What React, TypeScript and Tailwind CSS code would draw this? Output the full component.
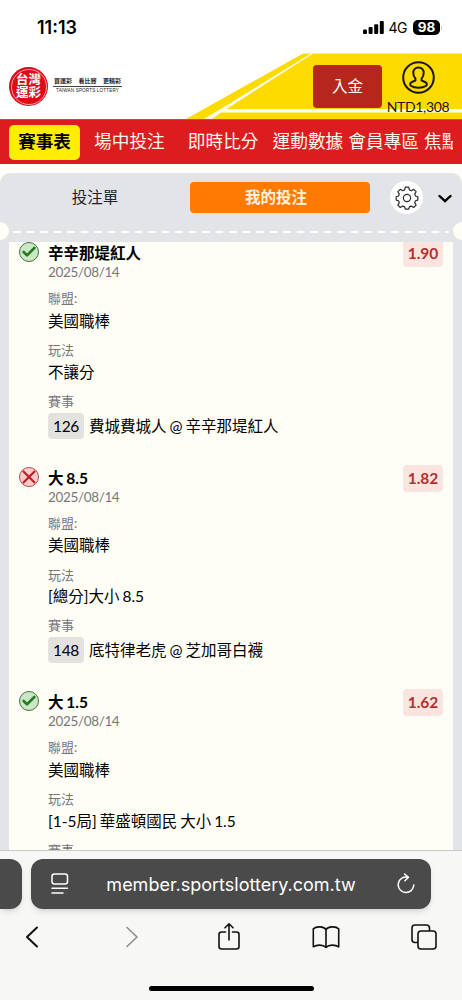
import { Check } from "lucide-react";

type Bet = {
  won: boolean;
  title: string;
  odds: string;
  play: string;
  no: string;
  match: string;
};

const bets: Bet[] = [
  {
    won: true,
    title: "辛辛那堤紅人",
    odds: "1.90",
    play: "不讓分",
    no: "126",
    match: "費城費城人 @ 辛辛那堤紅人",
  },
  {
    won: false,
    title: "大 8.5",
    odds: "1.82",
    play: "[總分]大小 8.5",
    no: "148",
    match: "底特律老虎 @ 芝加哥白襪",
  },
  {
    won: true,
    title: "大 1.5",
    odds: "1.62",
    play: "[1-5局] 華盛頓國民 大小 1.5",
    no: "",
    match: "",
  },
];

const StatusBar = () => (
  <div className="h-[53px] shrink-0 flex items-center justify-between pl-[37px] pr-[20px] pt-[2px] font-['Inter',sans-serif] text-black">
    <span className="text-[18px] font-semibold">11:13</span>
    <div className="flex items-center">
      <svg width="21" height="13" viewBox="0 0 21 13">
        <rect x="0" y="8.5" width="4" height="4.5" rx="1" />
        <rect x="5.6" y="6" width="4" height="7" rx="1" />
        <rect x="11.2" y="3.2" width="4" height="9.8" rx="1" />
        <rect x="16.8" y="0" width="4" height="13" rx="1" />
      </svg>
      <span className="ml-[5px] text-[14px] tracking-[-0.5px]">4G</span>
      <span className="ml-[6px] w-[27px] h-[15px] rounded-[5px] bg-black text-white text-[13.5px] leading-[15px] font-bold text-center">
        98
      </span>
      <span className="ml-px w-px h-[5px] rounded-r bg-gray-300" />
    </div>
  </div>
);

const Header = () => (
  <header className="relative h-[66px] shrink-0 bg-white">
    <svg
      className="absolute inset-0"
      width="462"
      height="66"
      viewBox="0 0 462 66"
    >
      <path d="M303 0.5H462V66H186z" fill="#fddb00" />
      <path d="M311 0.5h2L226.5 56H462v3.5H221L212 66h-8L229 51z" fill="#fffef5" />
    </svg>
    <div className="relative flex items-start h-full">
      <div className="ml-[9px] mt-[14px] w-[39px] h-[39px] rounded-full bg-[#df0a18] p-[1.5px]">
        <div className="w-full h-full rounded-full border border-[#f6a5a5] flex flex-col items-center justify-center text-white text-[12.5px] leading-[12.5px] font-bold">
          <span className="h-[12.5px]">台灣</span>
          <span className="h-[12.5px]">運彩</span>
        </div>
      </div>
      <div className="ml-[5px] mt-[23px] w-[69px] text-[#222]">
        <div className="h-[10px] pb-px flex justify-between px-[1px] text-[6px] leading-[9px] font-bold whitespace-nowrap">
          <span>買運彩</span>
          <span>看比賽</span>
          <span>更精彩</span>
        </div>
        <div className="border-t border-[#444] text-center whitespace-nowrap font-['Liberation_Sans',sans-serif] text-[4.6px] leading-[8px] tracking-[0.15px]">
          TAIWAN SPORTS LOTTERY
        </div>
      </div>
      <button className="ml-auto mt-[12px] w-[69px] h-[43px] rounded-[4px] bg-[#b5261c] text-white text-[15.5px]">
        入金
      </button>
      <div className="ml-[5px] mr-[13px] mt-[8px] w-[62px] flex flex-col items-center">
        <svg
          width="33"
          height="33"
          viewBox="0 0 33 33"
          fill="none"
          stroke="#1b1600"
          strokeWidth="2"
        >
          <circle cx="16.5" cy="16.5" r="15.3" />
          <path d="M16.5 6.5c-3.4 0-5.3 2.4-5.2 5.3 0 2.4.7 4.3 2.1 5.6v2l-4.3 2.1c-1.200.7-1.200 2.300-.3 3.200 2 1.400 4.500 2 7.700 2s5.700-.6 7.700-2c.9-.9.9-2.500-.3-3.200l-4.300-2.100v-2c1.400-1.300 2.100-3.200 2.100-5.600.1-2.900-1.800-5.300-5.200-5.300z" />
        </svg>
        <span className="mt-[4px] text-[14px] leading-[18px] tracking-[-0.35px] text-[#1b1600] whitespace-nowrap">
          NTD1,308
        </span>
      </div>
    </div>
  </header>
);

const Nav = () => (
  <nav className="h-[45px] shrink-0 bg-[#dc1c1f] border-t border-[#c9521a] flex items-center pl-[9px] pr-[9px] text-[17.7px] leading-[34px] text-[#fff5ec] whitespace-nowrap">
    <div className="flex items-center overflow-hidden">
      <span className="w-[71px] h-[35px] shrink-0 rounded-[5px] bg-[#ffee02] text-black font-bold text-center text-[17.5px]">
        賽事表
      </span>
      <span className="ml-[14px]">場中投注</span>
      <span className="ml-[23px]">即時比分</span>
      <span className="ml-[14px]">運動數據</span>
      <span className="ml-[5px]">會員專區</span>
      <span className="ml-[5px]">焦點</span>
    </div>
  </nav>
);

const GearIcon = () => (
  <svg
    width="24"
    height="24"
    viewBox="0 0 24 24"
    fill="none"
    stroke="#2a2a2e"
    strokeWidth="1.2"
    strokeLinejoin="round"
  >
    <path d="M10.300 1.200h3.400l.7 2.700 1.900.8 2.400-1.400 2.400 2.400-1.400 2.400.8 1.900 2.300.7v3.400l-2.300.7-.8 1.900 1.400 2.400-2.400 2.400-2.400-1.400-1.900.8-.7 2.300h-3.400l-.7-2.300-1.900-.8-2.400 1.400-2.400-2.400 1.400-2.400-.8-1.900-2.300-.7v-3.400l2.300-.7.8-1.900-1.400-2.400 2.400-2.400 2.400 1.400 1.900-.8z" />
    <circle cx="12" cy="12" r="3.6" />
  </svg>
);

const Tabs = () => (
  <div className="h-[57px] shrink-0 flex items-start pt-[9px]">
    <button className="w-[190px] h-[31px] text-[15.5px] text-[#1f1f2b]">投注單</button>
    <button className="w-[180px] h-[31px] pr-[8px] rounded-[4px] bg-[#ff7a00] text-[15.5px] font-bold text-[#fff3e0]">
      我的投注
    </button>
    <button className="ml-[20px] -mt-px w-[33px] h-[33px] rounded-full bg-white flex items-center justify-center">
      <GearIcon />
    </button>
    <svg className="ml-[15px] mt-[12px]" width="14" height="10" viewBox="0 0 14 10">
      <path
        d="M1.5 2l5.5 5.2L12.5 2"
        fill="none"
        stroke="#000"
        strokeWidth="2.4"
        strokeLinecap="round"
      />
    </svg>
  </div>
);

const Perforation = () => (
  <div className="h-[12px] shrink-0 flex items-start justify-between">
    <span className="w-[9px] h-[18px] -mt-[8px] rounded-r-full bg-[#fffef6]" />
    <svg width="438" height="3" viewBox="0 0 438 3">
      <path
        d="M2 2H436"
        stroke="#fffefa"
        strokeWidth="2"
        strokeLinecap="round"
        strokeDasharray="6 7.5"
      />
    </svg>
    <span className="w-[9px] h-[18px] -mt-[8px] rounded-l-full bg-[#fffef6]" />
  </div>
);

const BetItem = ({ bet }: { bet: Bet }) => (
  <li className="h-[224.5px] first:-mt-[2px] flex items-start px-[10px]">
    <span
      className={`w-[20px] h-[20px] mt-[2px] rounded-full border flex items-center justify-center ${
        bet.won ? "bg-[#cbe8c6] border-[#47703f]" : "bg-[#fccaca] border-[#b04a4e]"
      }`}
    >
      {bet.won ? (
        <Check className="w-[16px] h-[16px] shrink-0 text-[#277a22]" strokeWidth={4} />
      ) : (
        <svg className="w-[18px] h-[18px] shrink-0" viewBox="0 0 18 18">
          <path d="M3 3l12 12M15 3L3 15" stroke="#bc1820" strokeWidth="2" />
        </svg>
      )}
    </span>
    <div className="ml-[9px] mt-[3px] flex-1 text-[15.5px] text-black whitespace-nowrap">
      <p className="h-[20px] leading-[20px] font-bold [word-spacing:-1px]">{bet.title}</p>
      <p className="h-[19px] leading-[19px] text-[13.5px] tracking-[-0.35px] text-[#77767a]">2025/08/14</p>
      <p className="mt-[7px] h-[18px] leading-[18px] text-[13px] text-[#77767a]">聯盟:</p>
      <p className="mt-[1.5px] h-[25px] leading-[25px]">美國職棒</p>
      <p className="mt-[7.5px] h-[18px] leading-[18px] text-[13px] text-[#77767a]">玩法</p>
      <p className="mt-[0.5px] h-[25px] leading-[25px] [word-spacing:-1px]">{bet.play}</p>
      <p className="mt-[7px] h-[18px] leading-[18px] text-[13px] text-[#77767a]">賽事</p>
      {bet.no && (
        <p className="mt-[3px] h-[26px] leading-[26px] flex">
          <span className="w-[36px] rounded-[4px] bg-[#e4e2df] text-center tracking-[-0.4px]">{bet.no}</span>
          <span className="ml-[5px] [word-spacing:-1px]">{bet.match}</span>
        </p>
      )}
    </div>
    <span className="w-[40px] h-[27px] rounded-[4px] bg-[#f9e4df] text-center text-[15.5px] leading-[27px] font-bold text-[#b3312c]">
      {bet.odds}
    </span>
  </li>
);

const BrowserBar = () => (
  <footer className="h-[150px] shrink-0 flex flex-col bg-[#f7f7f6] border-t border-[#c9c9ca]">
    <div className="mt-[8px] flex">
      <div className="w-[22px] h-[50px] rounded-r-[12px] bg-[#4a4a4a] shadow-md" />
      <div className="ml-[9px] w-[400px] h-[50px] rounded-[12px] bg-[#4a4a4a] shadow-md flex items-center pl-[20px] pr-[15px] text-white">
        <svg
          width="18"
          height="22"
          viewBox="0 0 18 22"
          fill="none"
          stroke="#fff"
          strokeWidth="1.5"
          strokeLinecap="round"
        >
          <rect x="1" y="1" width="15.5" height="10" rx="2.5" />
          <path d="M1 15.3h15.5M1 20h11" />
        </svg>
        <span className="flex-1 pr-[3px] text-center font-['Inter',sans-serif] text-[18px]">
          member.sportslottery.com.tw
        </span>
        <svg
          width="20"
          height="22"
          viewBox="0 0 20 22"
          fill="none"
          stroke="#fff"
          strokeWidth="1.5"
          strokeLinecap="round"
          strokeLinejoin="round"
        >
          <path d="M12 4.2A7.8 7.8 0 1 0 17.8 12M8.5 1l4 3.3-3.600 3.500" />
        </svg>
      </div>
    </div>
    <div className="mt-[11px] h-[34px] flex items-center pl-[25px]">
      <svg width="14" height="22" viewBox="0 0 14 22" fill="none" stroke="#111" strokeWidth="2" strokeLinecap="round" strokeLinejoin="round">
        <path d="M12 1.500L2 11l10 9.500" />
      </svg>
      <svg className="ml-[86px]" width="14" height="22" viewBox="0 0 14 22" fill="none" stroke="#8d8d8d" strokeWidth="1.6" strokeLinecap="round" strokeLinejoin="round">
        <path d="M2 1.500L12 11 2 20.500" />
      </svg>
      <svg className="ml-[78px]" width="24" height="30" viewBox="0 0 24 30" fill="none" stroke="#111" strokeWidth="1.6" strokeLinecap="round" strokeLinejoin="round">
        <path d="M8.500 10H4.500A2.500 2.500 0 0 0 2 12.500v12A2.500 2.500 0 0 0 4.500 27h15a2.500 2.500 0 0 0 2.500-2.500v-12a2.500 2.500 0 0 0-2.500-2.500h-4M12 18V2M8 5.800L12 1.800l4 4" />
      </svg>
      <svg className="ml-[71px]" width="28" height="24" viewBox="0 0 28 24" fill="none" stroke="#111" strokeWidth="1.6" strokeLinecap="round" strokeLinejoin="round">
        <path d="M14 4.500C12 1.500 4.500.8 1.300 3.800v18c3.500-2.300 9.700-2.300 12.700.5 3-2.800 9.200-2.800 12.700-.5v-18C23.500.8 16 1.500 14 4.500zM14 4.500v17.500" />
      </svg>
      <svg className="ml-[71px]" width="26" height="26" viewBox="0 0 26 26" fill="none" stroke="#111" strokeWidth="1.6" strokeLinejoin="round">
        <rect x="7" y="7" width="18" height="18" rx="3" />
        <path d="M7 18.500H4a3 3 0 0 1-3-3V4a3 3 0 0 1 3-3h11.500a3 3 0 0 1 3 3v3" />
      </svg>
    </div>
    <div className="mt-auto mb-[9px] mx-auto w-[165px] h-[5px] rounded-full bg-black" />
  </footer>
);

export default function App() {
  return (
    <div className="w-[462px] h-[1000px] overflow-hidden flex flex-col bg-white font-['Lato','Noto_Sans_CJK_TC',sans-serif]">
      <StatusBar />
      <Header />
      <Nav />
      <main className="flex-1 min-h-0 pt-[9px] bg-[#fffef8]">
        <section className="h-full flex flex-col rounded-t-[10px] bg-[#e3e4e8]">
          <Tabs />
          <Perforation />
          <ul className="flex-1 min-h-0 mx-[9px] overflow-hidden bg-[#fffef6]">
            {bets.map((bet) => (
              <BetItem key={bet.title} bet={bet} />
            ))}
          </ul>
        </section>
      </main>
      <BrowserBar />
    </div>
  );
}
